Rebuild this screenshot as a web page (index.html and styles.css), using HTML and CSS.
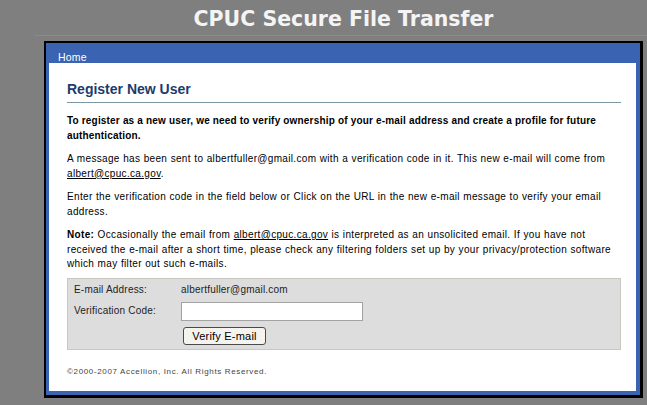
FILE: index.html
```html
<!DOCTYPE html>
<html>
<head>
<meta charset="utf-8">
<link rel="stylesheet" href="styles.css">
</head>
<body>
<div class="page">
  <div class="title">CPUC Secure File Transfer</div>
  <div class="panel">
    <div class="nav">Home</div>
    <div class="content">
      <h1 class="heading">Register New User</h1>
      <p class="lead">To register as a new user, we need to verify ownership of your e-mail address and create a profile for future authentication.</p>
      <p>A message has been sent to albertfuller@gmail.com with a verification code in it. This new e-mail will come from <a href="#">albert@cpuc.ca.gov</a>.</p>
      <p>Enter the verification code in the field below or Click on the URL in the new e-mail message to verify your email address.</p>
      <p><b>Note:</b> Occasionally the email from <a href="#">albert@cpuc.ca.gov</a> is interpreted as an unsolicited email. If you have not received the e-mail after a short time, please check any filtering folders set up by your privacy/protection software which may filter out such e-mails.</p>
      <div class="form">
        <div class="row"><span class="label">E-mail Address:</span><span class="value">albertfuller@gmail.com</span></div>
        <div class="row"><span class="label">Verification Code:</span><input class="field" type="text"></div>
        <div class="row"><span class="label"></span><button class="btn">Verify E-mail</button></div>
      </div>
      <div class="footer">©2000-2007 Accellion, Inc. All Rights Reserved.</div>
    </div>
  </div>
</div>
</body>
</html>
```
FILE: styles.css
```css
html, body {
  margin: 0;
  padding: 0;
  background: #7f7f7f;
}
body {
  font-family: "Liberation Sans", Arial, sans-serif;
}
.page {
  width: 647px;
  height: 405px;
  overflow: hidden;
}
.title {
  margin-left: 35px;
  height: 36px;
  border-bottom: 1px solid #8b8b8b;
  box-sizing: border-box;
  padding-left: 9px;
  padding-right: 4px;
  width: 612px;
  color: #f4f4f4;
  font-family: "DejaVu Sans", Verdana, sans-serif;
  font-weight: bold;
  font-size: 20.5px;
  line-height: 39px;
  text-align: center;
}
.panel {
  margin: 5px 0 0 44px;
  width: 599px;
  height: 357px;
  box-sizing: border-box;
  border: 2px solid #000;
  border-right-width: 3px;
  border-bottom-width: 3px;
  background: #3a63b2;
  padding: 0 4px 4px 3px;
  display: flex;
  flex-direction: column;
}
.nav {
  height: 20px;
  color: #ffffff;
  font-size: 10.5px;
  line-height: 11px;
  padding-top: 9px;
  box-sizing: border-box;
  padding-left: 9px;
  letter-spacing: 0.2px;
}
.content {
  flex: 1;
  background: #fff;
  padding: 0 15px 0 18px;
  color: #000;
  font-size: 10px;
  line-height: 14.5px;
}
.heading {
  margin: 17px 0 0;
  font-size: 14px;
  font-weight: bold;
  color: #1c3c6c;
  line-height: 18px;
  padding-bottom: 4px;
  border-bottom: 1px solid #7d96a6;
}
p {
  margin: 9px 0 0;
  letter-spacing: 0.33px;
  word-spacing: 0.3px;
}
p.lead {
  margin-top: 11px;
  font-weight: bold;
  letter-spacing: 0.18px;
  word-spacing: 0;
}
a {
  color: #000;
  text-decoration: underline;
}
.form {
  margin-top: 6px;
  background: #dddddd;
  border: 1px solid #c8c8c0;
  height: 72px;
  box-sizing: border-box;
  padding: 3px 0 0 6px;
  display: flex;
  flex-direction: column;
  gap: 2px;
}
.row {
  display: flex;
  align-items: center;
  min-height: 18px;
  letter-spacing: 0.2px;
}
.label {
  width: 107px;
  color: #222;
}
.value {
  color: #222;
}
.field {
  width: 182px;
  height: 19px;
  box-sizing: border-box;
  border: 1px solid #a3a3a3;
  background: #fff;
  margin: 0;
  padding: 0;
}
.btn {
  margin-top: 4px;
  margin-left: 2px;
  width: 83px;
  height: 18px;
  box-sizing: border-box;
  border: 1px solid #4a4a4a;
  border-radius: 3px;
  background: #f4f3ee;
  font-family: "Liberation Sans", Arial, sans-serif;
  font-size: 11px;
  color: #000;
  padding: 0;
  letter-spacing: 0.2px;
}
.footer {
  margin-top: 15px;
  font-size: 8px;
  color: #444;
  letter-spacing: 0.65px;
}
```
